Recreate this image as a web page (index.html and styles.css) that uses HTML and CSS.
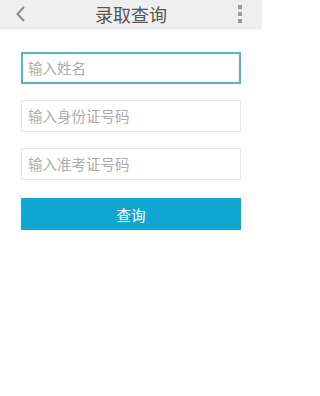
FILE: index.html
```html
<!DOCTYPE html>
<html lang="zh-CN">
<head>
<meta charset="utf-8">
<meta name="viewport" content="width=262">
<title>录取查询</title>
<link rel="stylesheet" href="styles.css">
</head>
<body>
<div class="app">
<header class="topbar">
  <div class="left">
    <svg class="back" width="10" height="16" viewBox="0 0 10 16"><polyline points="8,1 1.5,8 8,15" fill="none" stroke="#8a8a8a" stroke-width="2"/></svg>
  </div>
  <div class="title">录取查询</div>
  <div class="right">
    <div class="dots"><span></span><span></span><span></span></div>
  </div>
</header>
<main class="form">
  <div class="field focused"><span class="ph">输入姓名</span></div>
  <div class="field"><span class="ph">输入身份证号码</span></div>
  <div class="field"><span class="ph">输入准考证号码</span></div>
  <div class="btn">查询</div>
</main>
</div>
</body>
</html>
```
FILE: styles.css
```css
html, body {
  margin: 0;
  padding: 0;
  background: #ffffff;
  font-family: "Noto Sans CJK SC", "Noto Sans", sans-serif;
}
.app {
  width: 262px;
  min-height: 396px;
}
.topbar {
  height: 29px;
  background: #efefef;
  border-bottom: 1px solid #e8e8e8;
  box-sizing: border-box;
  display: grid;
  grid-template-columns: 1fr auto 1fr;
  align-items: center;
}
.left {
  padding-left: 16px;
  display: flex;
  align-items: center;
}
.back { display: block; }
.title {
  font-size: 18px;
  line-height: 20px;
  color: #555555;
}
.right {
  display: flex;
  justify-content: flex-end;
  padding-right: 20px;
}
.dots {
  display: flex;
  flex-direction: column;
  gap: 3px;
}
.dots span {
  width: 4px;
  height: 4px;
  background: #9a9a9a;
  display: block;
}
.form {
  padding: 23px 21px 0 21px;
  display: flex;
  flex-direction: column;
  gap: 16px;
}
.field {
  height: 32px;
  box-sizing: border-box;
  border: 1px solid #e6e6e6;
  background: #ffffff;
  display: flex;
  align-items: center;
  padding-left: 6px;
}
.field.focused {
  border: 2px solid #5ab3b8;
  padding-left: 5px;
  box-shadow: inset 0 0 2px #cde9eb;
}
.ph {
  font-size: 14.5px;
  color: #acacac;
  line-height: 18px;
}
.btn {
  margin-top: 2px;
  height: 32px;
  background: #12a6d4;
  color: #ffffff;
  font-size: 14.5px;
  display: flex;
  align-items: center;
  justify-content: center;
}
```
